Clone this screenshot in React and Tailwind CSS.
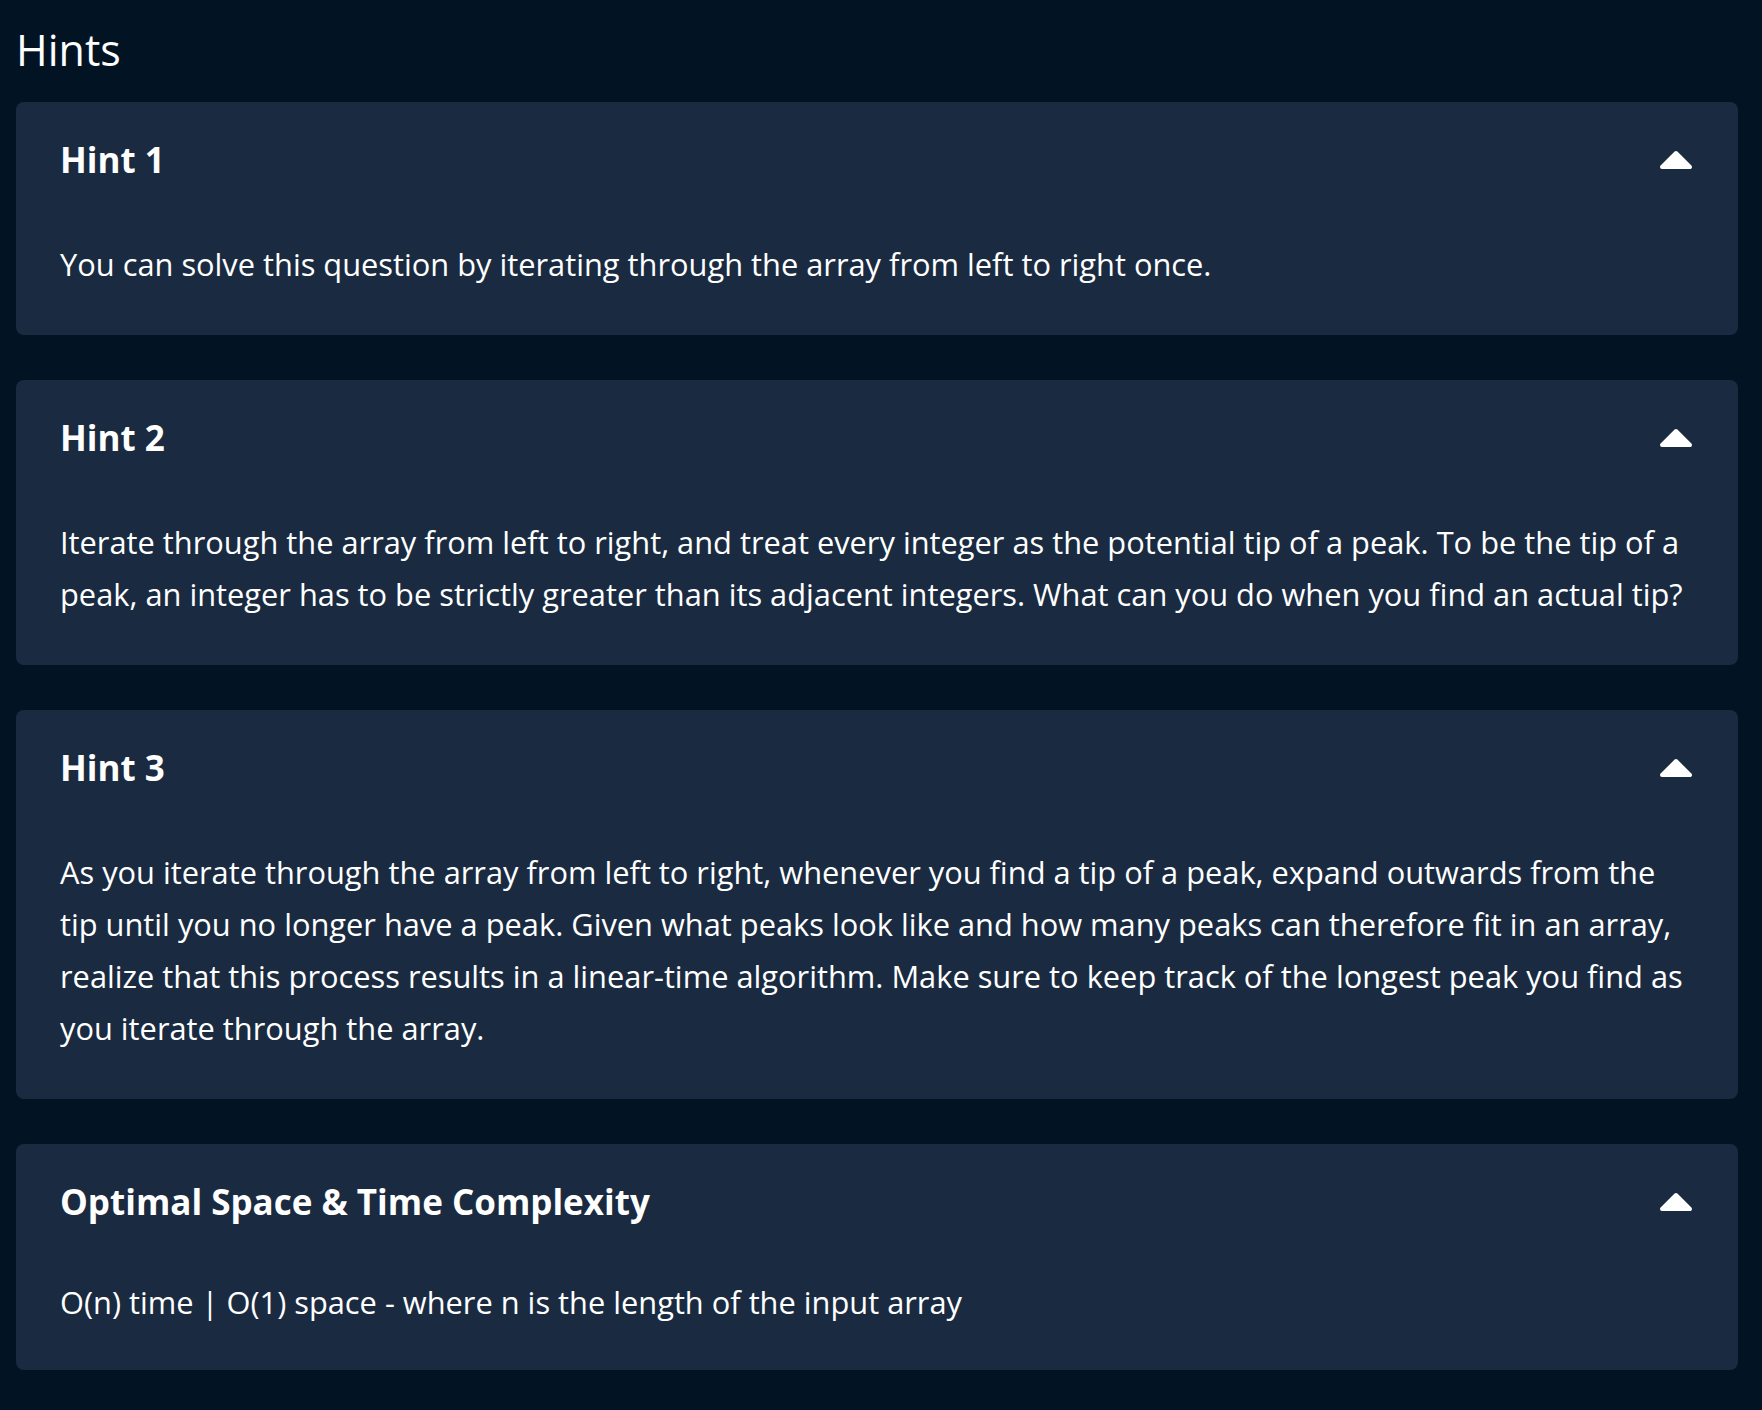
import { useState } from 'react';

const HINTS = [
  {
    title: 'Hint 1',
    body: 'You can solve this question by iterating through the array from left to right once.',
  },
  {
    title: 'Hint 2',
    body: 'Iterate through the array from left to right, and treat every integer as the potential tip of a peak. To be the tip of a peak, an integer has to be strictly greater than its adjacent integers. What can you do when you find an actual tip?',
  },
  {
    title: 'Hint 3',
    body: 'As you iterate through the array from left to right, whenever you find a tip of a peak, expand outwards from the tip until you no longer have a peak. Given what peaks look like and how many peaks can therefore fit in an array, realize that this process results in a linear-time algorithm. Make sure to keep track of the longest peak you find as you iterate through the array.',
  },
  {
    title: 'Optimal Space & Time Complexity',
    body: 'O(n) time | O(1) space - where n is the length of the input array',
    compact: true,
  },
];

const Caret = ({ open }) => (
  <svg width="34" height="20" viewBox="0 0 34 20" className={open ? '-mr-[3px]' : '-mr-[3px] rotate-180'}>
    <polygon points="3,17 17,3 31,17" fill="#ffffff" stroke="#ffffff" strokeWidth="4" strokeLinejoin="round" />
  </svg>
);

const HintCard = ({ hint }) => {
  const [open, setOpen] = useState(true);

  return (
    <div className={`rounded-lg bg-[#1a2b41] pl-[44px] pr-[48px] pt-[36px] ${hint.compact ? 'pb-[42px]' : 'pb-[45px]'}`}>
      <button
        type="button"
        onClick={() => setOpen((o) => !o)}
        className="flex w-full items-center justify-between text-left cursor-pointer"
      >
        <span className="text-[35px] leading-[44px] font-bold text-white">{hint.title}</span>
        <Caret open={open} />
      </button>
      {open && (
        <p className={`m-0 text-[30.8px] leading-[52px] text-white ${hint.compact ? 'mt-[52px]' : 'mt-[56px]'}`}>
          {hint.body}
        </p>
      )}
    </div>
  );
};

export default function App() {
  return (
    <div className="min-h-[1410px] bg-[#021423] pl-4 pr-6 pt-[22px] pb-10 font-['Open_Sans',sans-serif]">
      <h2 className="m-0 mb-[24px] text-[43px] leading-[56px] font-normal text-white">Hints</h2>
      <div className="flex flex-col gap-[45px]">
        {HINTS.map((h) => (
          <HintCard key={h.title} hint={h} />
        ))}
      </div>
    </div>
  );
}
